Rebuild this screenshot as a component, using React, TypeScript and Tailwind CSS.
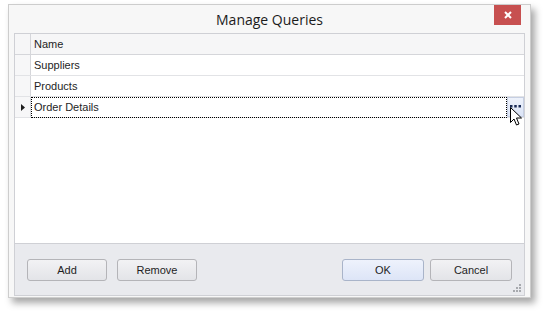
import React from 'react';

const rows = ['Suppliers', 'Products', 'Order Details'];

function DialogButton({ label, primary = false, wide = false }: { label: string; primary?: boolean; wide?: boolean }) {
  return (
    <button
      className={`h-[22px] rounded-[3px] border text-[11px] text-[#1e1e1e] ${wide ? 'w-[82px]' : 'w-[80px]'} ${
        primary
          ? 'border-[#a9b4c9] bg-gradient-to-b from-[#eef2fc] to-[#dde5f7]'
          : 'border-[#b4b4b8] bg-gradient-to-b from-[#f2f2f4] to-[#e3e4e8]'
      }`}
    >
      {label}
    </button>
  );
}

function Cursor() {
  return (
    <svg className="absolute left-[510px] top-[107px]" width="13" height="20" viewBox="0 0 13 20">
      <path
        d="M0.5 0.5 L0.5 15.5 L4 12 L6.5 18 L9 17 L6.5 11 L11.5 11 Z"
        fill="#fff"
        stroke="#000"
        strokeWidth="1"
        strokeLinejoin="miter"
      />
    </svg>
  );
}

export default function App() {
  return (
    <div className="relative h-[319px] w-[545px] bg-white font-['Liberation_Sans',Arial,sans-serif]">
      <div className="flex h-[294px] w-[523px] translate-x-[8px] translate-y-[4px] flex-col border border-[#cdcdcd] bg-[#f7f7f7] px-[5px] pb-[1px] shadow-[4px_5px_7px_rgba(0,0,0,0.35)]">
        {/* title bar */}
        <div className="relative flex h-[28px] items-center justify-center">
          <span className="mt-[1px] font-['Open_Sans',sans-serif] text-[14px] text-[#1b1b1b]">Manage Queries</span>
          <div className="absolute right-[4px] top-0 flex h-[20px] w-[27px] items-center justify-center bg-[#c75050]">
            <svg width="8" height="8" viewBox="0 0 8 8">
              <path d="M1 1 L7 7 M7 1 L1 7" stroke="#fff" strokeWidth="2" />
            </svg>
          </div>
        </div>

        {/* grid + buttons */}
        <div className="flex flex-1 flex-col border border-[#cfd0d5]">
          <div className="flex-1 bg-white text-[11px] text-[#1e1e1e]">
            <div className="flex h-[21px] border-b border-[#d5d6da] bg-[#f6f6f7]">
              <div className="w-[16px] border-r border-[#d5d6da]" />
              <div className="flex items-center pl-[3px]">Name</div>
            </div>
            {rows.map((r, i) => {
              const focused = i === rows.length - 1;
              return (
                <div key={r} className="flex h-[21px] border-b border-[#e2e3e6]">
                  <div className="flex w-[16px] items-center justify-center border-r border-[#d5d6da] bg-[#f7f7f8]">
                    {focused && (
                      <svg width="4" height="7" viewBox="0 0 4 7">
                        <path d="M0 0 L4 3.5 L0 7 Z" fill="#1e1e1e" />
                      </svg>
                    )}
                  </div>
                  {focused ? (
                    <div className="flex flex-1">
                      <div className="-mb-px flex flex-1 items-center border border-dotted border-black pl-[2px]">{r}</div>
                      <div className="flex w-[17px] justify-center border border-[#c6cfe2] bg-gradient-to-b from-[#eef2fb] to-[#dae3f6] pt-[7px]">
                        <svg width="11" height="3" viewBox="0 0 11 3">
                          <rect x="0" y="0" width="2.5" height="2.5" fill="#1a2a55" />
                          <rect x="4.25" y="0" width="2.5" height="2.5" fill="#1a2a55" />
                          <rect x="8.5" y="0" width="2.5" height="2.5" fill="#1a2a55" />
                        </svg>
                      </div>
                    </div>
                  ) : (
                    <div className="flex items-center pl-[3px]">{r}</div>
                  )}
                </div>
              );
            })}
          </div>
          <div className="relative flex h-[52px] items-center border-t border-[#cfd0d5] bg-[#e9eaee] px-[12px] pt-[1px]">
            <div className="flex gap-[10px]">
              <DialogButton label="Add" />
              <DialogButton label="Remove" />
            </div>
            <div className="ml-auto flex gap-[6px]">
              <DialogButton label="OK" primary wide />
              <DialogButton label="Cancel" wide />
            </div>
            <svg className="absolute bottom-[3px] right-[3px]" width="8" height="8" viewBox="0 0 8 8">
              <rect x="6" y="0" width="2" height="2" fill="#a7a9ae" />
              <rect x="3" y="3" width="2" height="2" fill="#a7a9ae" />
              <rect x="6" y="3" width="2" height="2" fill="#a7a9ae" />
              <rect x="0" y="6" width="2" height="2" fill="#a7a9ae" />
              <rect x="3" y="6" width="2" height="2" fill="#a7a9ae" />
              <rect x="6" y="6" width="2" height="2" fill="#a7a9ae" />
            </svg>
          </div>
        </div>
      </div>
      <Cursor />
    </div>
  );
}
